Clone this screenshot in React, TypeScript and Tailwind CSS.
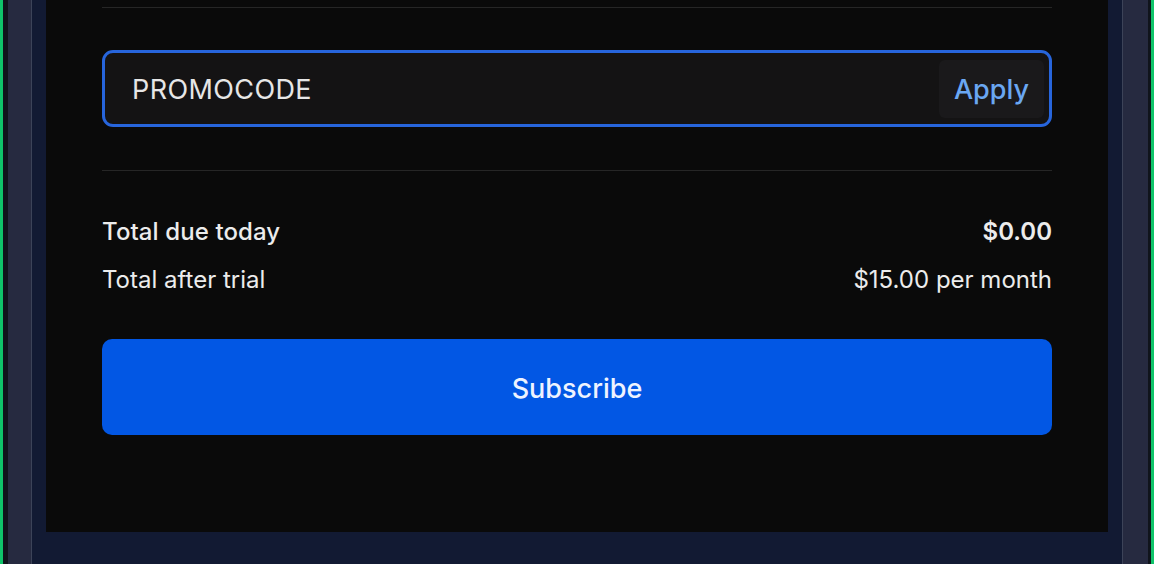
export default function App() {
  return (
    <div
      className="flex h-[564px] w-[1154px] overflow-hidden bg-[#0d0f17]"
      style={{ fontFamily: "Inter, 'Noto Sans', sans-serif" }}
    >
      {/* left frame */}
      <div className="w-[3px] bg-[#0fc46a]" />
      <div className="w-[5px] bg-[#10141c]" />
      <div className="w-[23px] bg-[#262a40]" />
      <div className="w-[1px] bg-[#3c4358]" />

      {/* navy area with panel */}
      <div className="flex flex-1 flex-col bg-[#121a33] px-[14px]">
        <div className="flex h-[532px] flex-col bg-[#0a0a0a] px-[56px] pt-[7px]">
          <div className="h-px bg-[#262626]" />

          {/* promo code */}
          <div className="mt-[42px] flex h-[77px] items-center rounded-[11px] border-[3px] border-[#2765dc] bg-[#141314] pl-[27px] pr-[5px]">
            <span className="flex-1 pt-[4px] text-[27px] tracking-[0.4px] text-[#e6e6e6]">PROMOCODE</span>
            <button className="flex h-[58px] w-[105px] items-center justify-center rounded-[6px] bg-[#1a191b] pt-[3px] text-[27px] font-medium text-[#6aa7f2]">
              Apply
            </button>
          </div>

          <div className="mt-[43px] h-px bg-[#262626]" />

          {/* totals */}
          <div className="mt-[46px] flex items-center justify-between text-[24px] leading-[30px] text-[#ececec]">
            <span className="font-medium tracking-[0.1px]">Total due today</span>
            <span className="font-semibold">$0.00</span>
          </div>
          <div className="mt-[18px] flex items-center justify-between text-[24px] leading-[30px] text-[#ececec]">
            <span>Total after trial</span>
            <span>$15.00 per month</span>
          </div>

          <button className="mt-[44px] flex h-[96px] items-center justify-center rounded-[10px] bg-[#0257e4] pt-[4px] text-[27px] font-medium text-[#eef3ff]">
            Subscribe
          </button>
        </div>
      </div>

      {/* right frame */}
      <div className="w-[1px] bg-[#3c4358]" />
      <div className="w-[25px] bg-[#262a40]" />
      <div className="w-[3px] bg-[#10141c]" />
      <div className="w-[3px] bg-[#0fc46a]" />
    </div>
  );
}
